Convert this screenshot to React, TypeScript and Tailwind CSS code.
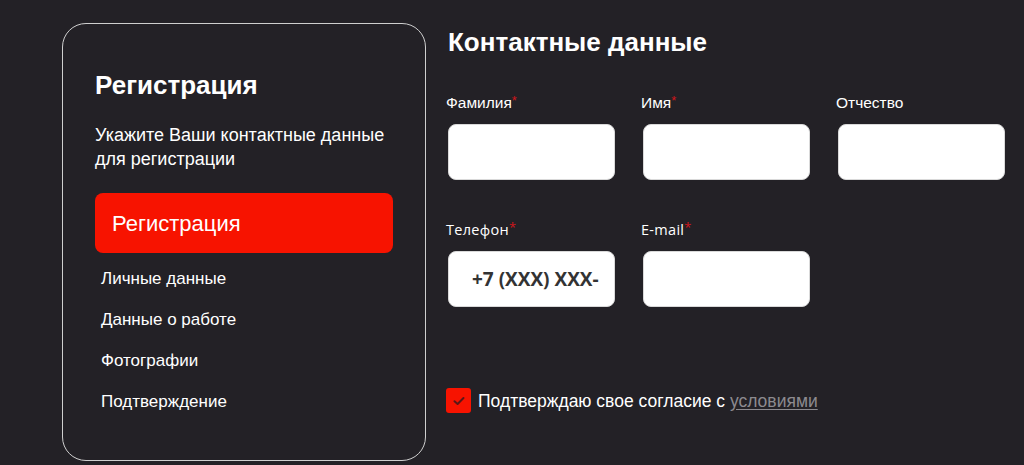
import React from "react";

const sans = { fontFamily: '"Liberation Sans", Arial, sans-serif' };

function Label({ text, req, geo }: { text: string; req?: boolean; geo?: boolean }) {
  return (
    <div
      className={`h-[20px] leading-[20px] text-white ${geo ? "text-[14.5px] font-medium tracking-[0.3px]" : "text-[15.5px]"}`}
      style={{ fontFamily: geo ? '"Open Sans", sans-serif' : '"Liberation Sans", Arial, sans-serif' }}
    >
      {text}
      {req && <span className="relative -top-[3px] text-[13px] text-[#d0161b]">*</span>}
    </div>
  );
}

function Field({ label, req, geo, placeholder }: { label: string; req?: boolean; geo?: boolean; placeholder?: string }) {
  return (
    <div className="flex w-[195px] shrink-0 flex-col">
      <Label text={label} req={req} geo={geo} />
      <div className="mt-[11px] ml-[2px] flex h-[56px] w-[167px] items-center overflow-hidden rounded-[8px] border border-[#d9d9d9] bg-white pl-[23px]">
        {placeholder && (
          <span
            className="whitespace-nowrap text-[19px] font-bold text-[#333333]"
            style={{ fontFamily: '"Open Sans", sans-serif' }}
          >
            {placeholder}
          </span>
        )}
      </div>
    </div>
  );
}

export default function App() {
  return (
    <div className="flex h-[465px] w-[1024px] overflow-hidden bg-[#232126] text-white" style={sans}>
      {/* Left card */}
      <div className="ml-[62px] mt-[23px] flex h-[438px] w-[364px] shrink-0 flex-col rounded-[24px] border border-[#cfcfcf] pl-[32px] pt-[45px]">
        <h1 className="text-[26px] font-bold leading-[32px]">Регистрация</h1>
        <p className="mt-[22px] text-[18px] leading-[24px]">
          Укажите Ваши контактные данные
          <br />
          для регистрации
        </p>
        <div className="mt-[22px] flex h-[60px] w-[298px] items-center rounded-[8px] bg-[#f71300] pl-[17px] text-[22px]">
          Регистрация
        </div>
        <ul className="mt-[14px] flex flex-col gap-[17px] pl-[6px] text-[17px] leading-[24px]">
          <li>Личные данные</li>
          <li>Данные о работе</li>
          <li>Фотографии</li>
          <li>Подтверждение</li>
        </ul>
      </div>

      {/* Right form */}
      <div className="ml-[20px] flex shrink-0 flex-col pt-[26px]">
        <h2 className="ml-[2px] text-[26px] font-bold leading-[32px]">Контактные данные</h2>
        <div className="mt-[35px] flex">
          <Field label="Фамилия" req />
          <Field label="Имя" req />
          <Field label="Отчество" />
        </div>
        <div className="mt-[40px] flex">
          <Field label="Телефон" req geo placeholder="+7 (XXX) XXX-" />
          <Field label="E-mail" req geo />
        </div>
        <div className="mt-[81px] flex items-center">
          <div className="flex h-[25px] w-[25px] shrink-0 items-center justify-center rounded-[3px] bg-[#f71300]">
            <svg width="14" height="14" viewBox="0 0 14 14" fill="none">
              <path d="M2.5 7.2 L5.6 10 L11.5 4" stroke="#5a1717" strokeWidth="2" strokeLinecap="round" strokeLinejoin="round" />
            </svg>
          </div>
          <span className="ml-[7px] whitespace-nowrap text-[17.5px] leading-[24px]">
            Подтверждаю свое согласие с{" "}
            <span className="text-[#8c8a8f] underline underline-offset-2">условиями</span>
          </span>
        </div>
      </div>
    </div>
  );
}
